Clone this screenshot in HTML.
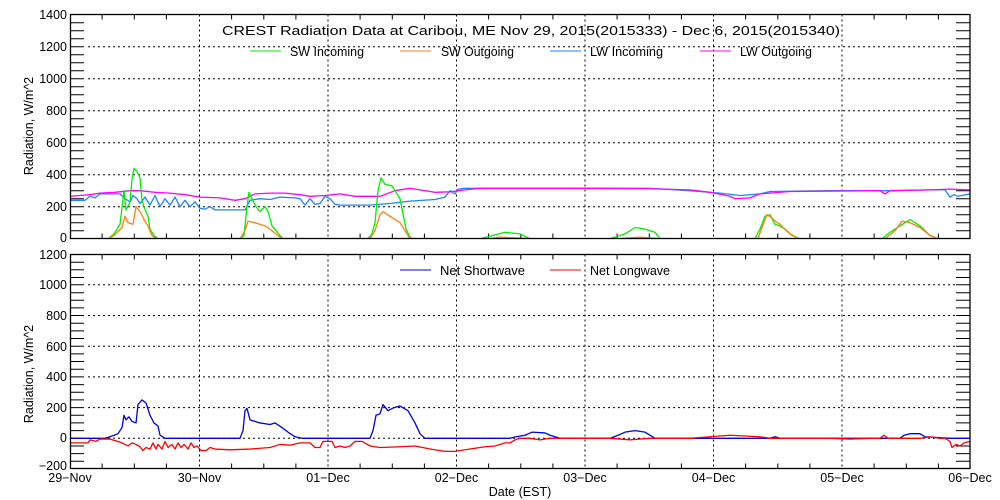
<!DOCTYPE html>
<html><head><meta charset="utf-8"><style>
html,body{margin:0;padding:0;background:#fff;width:1000px;height:500px;overflow:hidden}
svg{display:block}
text{font-family:"Liberation Sans",sans-serif;font-size:12.5px;fill:#000}
.g{stroke:#000;stroke-width:1;stroke-dasharray:2 3;fill:none}
.d{fill:none;stroke-width:1.3;vector-effect:non-scaling-stroke;stroke-linejoin:round}
</style></head><body>
<svg width="1000" height="500" viewBox="0 0 1000 500" xmlns="http://www.w3.org/2000/svg">
<defs>
<clipPath id="c1"><rect x="70" y="14" width="900" height="225"/></clipPath>
<clipPath id="c2"><rect x="70" y="254" width="900" height="215"/></clipPath>
</defs>
<!-- TOP PLOT -->
<g>
<path class="g" d="M88 46.7H955M88 78.7H955M88 110.7H955M88 142.7H955M88 174.7H955M88 206.7H955"/>
<path class="g" d="M199.5 14.5V238.5M328 14.5V238.5M456.5 14.5V238.5M585 14.5V238.5M713.5 14.5V238.5M842 14.5V238.5"/>
<path stroke="#000" stroke-width="1" d="M70 22.7h14M70 30.7h14M70 38.7h14M70 46.7h14M70 54.7h14M70 62.7h14M70 70.7h14M70 78.7h14M70 86.7h14M70 94.7h14M70 102.7h14M70 110.7h14M70 118.7h14M70 126.7h14M70 134.7h14M70 142.7h14M70 150.7h14M70 158.7h14M70 166.7h14M70 174.7h14M70 182.7h14M70 190.7h14M70 198.7h14M70 206.7h14M70 214.7h14M70 222.7h14M70 230.7h14
M956 22.7h14M956 30.7h14M956 38.7h14M956 46.7h14M956 54.7h14M956 62.7h14M956 70.7h14M956 78.7h14M956 86.7h14M956 94.7h14M956 102.7h14M956 110.7h14M956 118.7h14M956 126.7h14M956 134.7h14M956 142.7h14M956 150.7h14M956 158.7h14M956 166.7h14M956 174.7h14M956 182.7h14M956 190.7h14M956 198.7h14M956 206.7h14M956 214.7h14M956 222.7h14M956 230.7h14"/>
<path stroke="#000" stroke-width="1" d="M102.1 238.5v-5M134.3 238.5v-5M166.4 238.5v-5M231.6 238.5v-5M263.8 238.5v-5M295.9 238.5v-5M360.1 238.5v-5M392.3 238.5v-5M424.4 238.5v-5M488.6 238.5v-5M520.8 238.5v-5M552.9 238.5v-5M617.1 238.5v-5M649.3 238.5v-5M681.4 238.5v-5M745.6 238.5v-5M777.8 238.5v-5M809.9 238.5v-5M874.1 238.5v-5M906.3 238.5v-5M938.4 238.5v-5
M102.1 14.5v5M134.3 14.5v5M166.4 14.5v5M231.6 14.5v5M263.8 14.5v5M295.9 14.5v5M360.1 14.5v5M392.3 14.5v5M424.4 14.5v5M488.6 14.5v5M520.8 14.5v5M552.9 14.5v5M617.1 14.5v5M649.3 14.5v5M681.4 14.5v5M745.6 14.5v5M777.8 14.5v5M809.9 14.5v5M874.1 14.5v5M906.3 14.5v5M938.4 14.5v5"/>
<g clip-path="url(#c1)">
<g transform="translate(70,238.7) scale(1,-0.16)">
<polyline class="d" stroke="#1e84ff" points="0,240 15,240 20,265 25,255 30,280 50,280 55,250 60,230 63,270 67,250 70,220 75,260 80,210 85,270 90,200 95,250 100,210 105,260 110,200 115,240 120,200 125,230 130,190 135,185 140,200 145,180 175,180 180,240 190,250 200,245 210,260 225,255 230,250 235,210 240,250 245,215 250,220 255,265 260,250 265,215 270,210 300,210 320,220 340,235 365,245 375,260 380,300 385,280 388,310 395,315 530,315 580,315 620,300 650,285 670,270 690,280 700,295 760,300 820,300 860,305 875,305 880,260 884,275 888,265 900,280"/>
<polyline class="d" stroke="#ff00ff" points="0,265 10,270 20,275 30,285 45,290 60,300 70,300 85,290 100,285 115,275 130,260 150,255 165,240 175,250 185,280 200,285 215,285 230,275 240,265 255,270 270,280 285,265 310,265 325,300 340,315 350,305 365,290 380,293 395,305 410,315 530,315 580,312 620,305 640,290 660,265 665,250 680,255 690,280 720,295 780,298 800,300 810,300 815,280 820,300 860,305 880,310 900,305"/>
<polyline class="d" stroke="#00ee00" points="20,0 38,0 44,30 50,90 54,300 56,180 60,230 62,370 64,440 67,420 70,380 72,240 74,200 78,140 80,60 84,20 88,0 170,0 174,20 177,200 179,290 182,250 186,200 190,170 195,200 198,170 202,80 210,20 213,0 298,0 302,30 305,100 308,300 311,380 315,340 322,330 330,250 336,60 340,10 343,0 410,0 420,15 435,40 450,30 460,0 540,0 555,30 565,70 575,60 585,40 590,0 685,0 690,60 695,140 700,150 705,90 710,80 715,60 722,20 730,0 812,0 820,40 835,100 840,120 850,80 860,20 868,0 900,0"/>
<polyline class="d" stroke="#ff7f0e" points="20,0 38,0 44,20 52,70 55,140 58,100 63,90 66,200 70,170 74,120 78,80 82,20 86,0 170,0 175,50 178,110 185,100 195,80 200,60 210,10 213,0 300,0 305,50 310,150 313,170 320,140 330,100 336,40 340,0 420,0 430,10 460,0 550,0 570,10 590,0 688,0 692,70 697,150 702,130 705,110 710,90 718,40 728,0 815,0 825,50 832,110 840,100 850,70 860,20 868,0 900,0"/>
</g>
</g>
<rect x="70.5" y="14.5" width="899.5" height="224" fill="none" stroke="#000" stroke-width="1.3"/>
<text x="531" y="35" text-anchor="middle" textLength="618" lengthAdjust="spacingAndGlyphs">CREST Radiation Data at Caribou, ME   Nov 29, 2015(2015333) - Dec  6, 2015(2015340)</text>
<path stroke="#00ee00" d="M250 51H281"/><text x="290" y="56" textLength="74" lengthAdjust="spacingAndGlyphs">SW Incoming</text>
<path stroke="#ff7f0e" d="M400 51H431"/><text x="441" y="56" textLength="73" lengthAdjust="spacingAndGlyphs">SW Outgoing</text>
<path stroke="#1e84ff" d="M550 51H581"/><text x="590" y="56" textLength="73" lengthAdjust="spacingAndGlyphs">LW Incoming</text>
<path stroke="#ff00ff" d="M700 51H731"/><text x="740" y="56" textLength="72" lengthAdjust="spacingAndGlyphs">LW Outgoing</text>
<g text-anchor="end">
<text x="67" y="19">1400</text><text x="67" y="51">1200</text><text x="67" y="83">1000</text><text x="67" y="115">800</text><text x="67" y="147">600</text><text x="67" y="179">400</text><text x="67" y="211">200</text><text x="67" y="242">0</text>
</g>
<text transform="translate(33,126) rotate(-90)" text-anchor="middle">Radiation, W/m^2</text>
</g>
<!-- BOTTOM PLOT -->
<g>
<path class="g" d="M88 284.8H955M88 315.5H955M88 346.2H955M88 376.9H955M88 407.6H955M88 438.3H955"/>
<path class="g" d="M199.5 254.5V468.5M328 254.5V468.5M456.5 254.5V468.5M585 254.5V468.5M713.5 254.5V468.5M842 254.5V468.5"/>
<path stroke="#000" stroke-width="1" d="M70 262.2h14M70 269.8h14M70 277.5h14M70 284.8h14M70 292.8h14M70 300.2h14M70 307.9h14M70 315.5h14M70 323.2h14M70 330.9h14M70 338.5h14M70 346.2h14M70 353.9h14M70 361.5h14M70 369.2h14M70 376.9h14M70 384.6h14M70 392.3h14M70 399.9h14M70 407.6h14M70 415.3h14M70 422.9h14M70 430.6h14M70 438.3h14M70 446h14M70 453.6h14M70 461.3h14
M956 262.2h14M956 269.8h14M956 277.5h14M956 284.8h14M956 292.8h14M956 300.2h14M956 307.9h14M956 315.5h14M956 323.2h14M956 330.9h14M956 338.5h14M956 346.2h14M956 353.9h14M956 361.5h14M956 369.2h14M956 376.9h14M956 384.6h14M956 392.3h14M956 399.9h14M956 407.6h14M956 415.3h14M956 422.9h14M956 430.6h14M956 438.3h14M956 446h14M956 453.6h14M956 461.3h14"/>
<path stroke="#000" stroke-width="1" d="M102.1 468.5v-5M134.3 468.5v-5M166.4 468.5v-5M231.6 468.5v-5M263.8 468.5v-5M295.9 468.5v-5M360.1 468.5v-5M392.3 468.5v-5M424.4 468.5v-5M488.6 468.5v-5M520.8 468.5v-5M552.9 468.5v-5M617.1 468.5v-5M649.3 468.5v-5M681.4 468.5v-5M745.6 468.5v-5M777.8 468.5v-5M809.9 468.5v-5M874.1 468.5v-5M906.3 468.5v-5M938.4 468.5v-5
M102.1 254.5v5M134.3 254.5v5M166.4 254.5v5M231.6 254.5v5M263.8 254.5v5M295.9 254.5v5M360.1 254.5v5M392.3 254.5v5M424.4 254.5v5M488.6 254.5v5M520.8 254.5v5M552.9 254.5v5M617.1 254.5v5M649.3 254.5v5M681.4 254.5v5M745.6 254.5v5M777.8 254.5v5M809.9 254.5v5M874.1 254.5v5M906.3 254.5v5M938.4 254.5v5"/>
<g clip-path="url(#c2)">
<g transform="translate(70,438.3) scale(1,-0.1535)">
<polyline class="d" stroke="#0000e0" points="0,0 35,0 40,10 48,30 52,70 54,150 56,120 59,140 62,110 66,100 68,220 72,250 76,230 80,150 84,100 88,80 90,20 95,0 170,0 173,50 175,180 177,195 180,120 190,100 200,90 205,100 212,70 218,40 225,10 232,0 300,0 303,50 306,150 310,160 313,220 318,180 324,200 330,210 338,180 345,100 350,30 355,0 440,0 446,10 455,20 462,40 475,35 480,20 490,0 540,0 548,20 555,40 565,50 575,40 585,0 700,0 705,10 710,0 830,0 834,20 840,30 850,30 855,10 880,0 900,0"/>
<polyline class="d" stroke="#ff0000" points="0,-30 18,-30 20,-10 26,-20 30,-5 40,-5 45,-15 50,-25 55,-40 58,-50 62,-30 66,-40 70,-55 73,-80 76,-60 80,-70 83,-30 86,-70 88,-40 92,-70 95,-20 98,-60 102,-40 105,-70 108,-30 111,-60 114,-40 118,-70 121,-30 124,-60 127,-50 131,-80 136,-80 140,-60 145,-70 160,-75 180,-70 200,-60 210,-40 220,-45 230,-30 240,-30 245,-60 250,-60 253,-20 262,-20 265,-60 270,-50 275,-60 280,-50 285,-20 292,-20 300,-50 310,-60 330,-55 345,-50 360,-70 375,-85 385,-85 400,-70 415,-55 425,-50 435,-30 440,-30 445,-10 450,0 460,0 470,-10 480,0 540,0 560,-10 580,0 620,0 640,10 660,20 690,10 700,0 760,0 780,-5 800,0 810,0 814,20 818,0 850,0 860,10 870,0 875,0 880,-20 882,-60 886,-40 890,-50 894,-30 900,-20"/>
</g>
</g>
<rect x="70.5" y="254.5" width="899.5" height="214" fill="none" stroke="#000" stroke-width="1.3"/>
<path stroke="#0000e0" d="M400 270H431"/><text x="440" y="275" textLength="85" lengthAdjust="spacingAndGlyphs">Net Shortwave</text>
<path stroke="#ff0000" d="M550 270H581"/><text x="590" y="275" textLength="80" lengthAdjust="spacingAndGlyphs">Net Longwave</text>
<g text-anchor="end">
<text x="67" y="259">1200</text><text x="67" y="289">1000</text><text x="67" y="320">800</text><text x="67" y="351">600</text><text x="67" y="381">400</text><text x="67" y="412">200</text><text x="67" y="442">0</text><text x="67" y="470">−200</text>
</g>
<g text-anchor="middle">
<text x="70" y="482">29−Nov</text><text x="199.5" y="482">30−Nov</text><text x="328" y="482">01−Dec</text><text x="456.5" y="482">02−Dec</text><text x="585" y="482">03−Dec</text><text x="713.5" y="482">04−Dec</text><text x="842" y="482">05−Dec</text><text x="970" y="482">06−Dec</text>
<text x="520" y="496">Date (EST)</text>
</g>
<text transform="translate(33,374) rotate(-90)" text-anchor="middle">Radiation, W/m^2</text>
</g>
</svg>
</body></html>
